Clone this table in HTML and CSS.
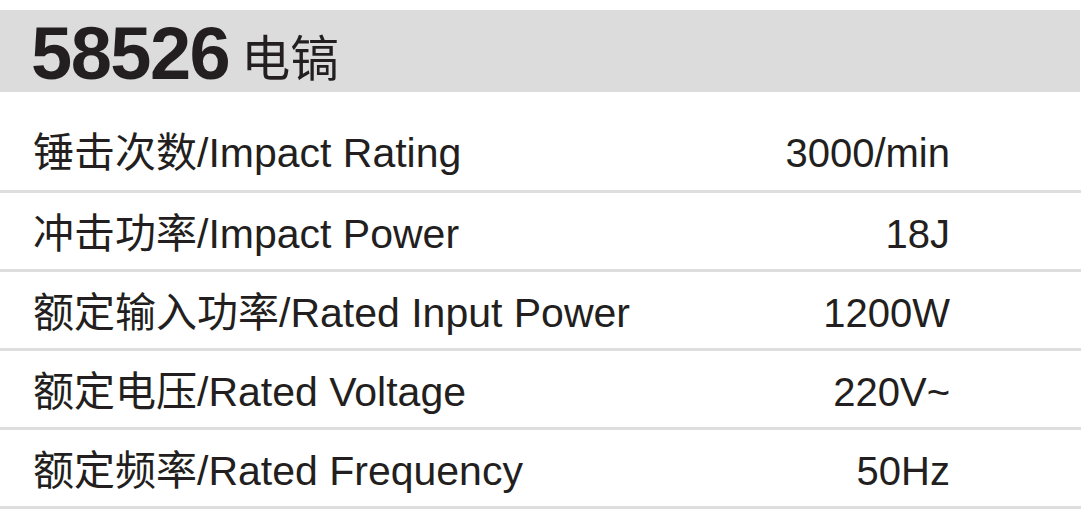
FILE: index.html
```html
<!DOCTYPE html>
<html lang="zh">
<head>
<meta charset="utf-8">
<title>58526 电镐</title>
<link rel="stylesheet" href="styles.css">
</head>
<body>
<div class="header">
  <span class="model">58526</span><span class="name">电镐</span>
</div>
<div class="specs">
  <div class="row first"><span class="label">锤击次数/Impact Rating</span><span class="value">3000/min</span></div>
  <div class="row"><span class="label">冲击功率/Impact Power</span><span class="value">18J</span></div>
  <div class="row"><span class="label">额定输入功率/Rated Input Power</span><span class="value">1200W</span></div>
  <div class="row"><span class="label">额定电压/Rated Voltage</span><span class="value">220V~</span></div>
  <div class="row"><span class="label">额定频率/Rated Frequency</span><span class="value">50Hz</span></div>
</div>
</body>
</html>
```
FILE: styles.css
```css
html, body {
  margin: 0;
  padding: 0;
  background: #ffffff;
}
body {
  width: 1081px;
  height: 511px;
  overflow: hidden;
  font-family: "Liberation Sans", "Noto Sans CJK SC", sans-serif;
  color: #231f20;
}
.header {
  margin-top: 10px;
  height: 82px;
  width: 1080px;
  background: #dcdcdc;
  display: flex;
  align-items: baseline;
  padding-left: 31px;
  box-sizing: border-box;
  line-height: 82px;
}
.model {
  font-weight: bold;
  font-size: 74px;
  letter-spacing: -1.5px;
  position: relative;
  top: 3px;
}
.name {
  font-family: "Noto Sans CJK SC", sans-serif;
  font-size: 49px;
  margin-left: 12px;
  position: relative;
  top: 0px;
}
.specs {
  display: flex;
  flex-direction: column;
}
.row {
  height: 70px;
  border-bottom: 3px solid #dedede;
  display: flex;
  align-items: center;
  justify-content: space-between;
  padding: 6px 131px 0 33px;
  box-sizing: content-box;
  line-height: 50px;
}
.row.first {
  padding-top: 24px;
  height: 74px;
}
.label, .value {
  white-space: nowrap;
  display: block;
  height: 50px;
}
.label {
  font-size: 41px;
}
.value {
  font-size: 40px;
}
```
